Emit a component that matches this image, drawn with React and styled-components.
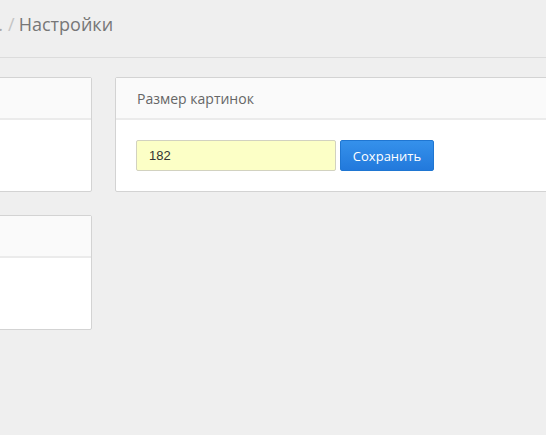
import React from 'react'
import styled, { createGlobalStyle } from 'styled-components'

const GlobalStyle = createGlobalStyle`
  html, body {
    margin: 0;
    padding: 0;
    background: #efefef;
    overflow: hidden;
  }
  body {
    font-family: "Open Sans", "Liberation Sans", sans-serif;
    color: #555;
  }
`;

const Page = styled.div`
  width: 546px;
  height: 435px;
  overflow: hidden;
`;

const TopBar = styled.div`
  height: 57px;
  border-bottom: 1px solid #dcdcdc;
  display: flex;
  align-items: center;
  overflow: hidden;
`;

const Crumbs = styled.div`
  display: flex;
  align-items: center;
  white-space: nowrap;
  margin-left: -73px;
  margin-top: -9px;
  font-size: 18px;
`;

const Crumb = styled.span`
  color: ${(p) => (p.$current ? '#777' : '#aaa')};
`;

const Sep = styled.span`
  color: #c4c4c4;
  margin: 0 4px 0 5px;
`;

const Content = styled.div`
  display: grid;
  grid-template-columns: 300px 460px;
  gap: 23px;
  margin-left: -208px;
  padding-top: 19px;
  align-items: start;
`;

const Column = styled.div`
  display: flex;
  flex-direction: column;
  gap: 23px;
`;

const Panel = styled.div`
  background: #fff;
  border: 1px solid #d3d3d3;
  border-radius: 2px;
`;

const PanelHeader = styled.div`
  height: 40px;
  background: #fafafa;
  border-bottom: 2px solid #ebebeb;
  display: flex;
  align-items: center;
  padding-left: 21px;
  font-size: 14px;
  color: #666;
`;

const PanelBody = styled.div`
  height: 31px;
  padding: 20px;
  display: flex;
  align-items: center;
  gap: 4px;
`;

const SizeInput = styled.input`
  box-sizing: border-box;
  width: 200px;
  height: 31px;
  border: 1px solid #d2d2c0;
  border-radius: 2px;
  background: #fcffc6;
  padding: 0 12px;
  font-family: "Liberation Sans", Arial, sans-serif;
  font-size: 13px;
  color: #333;
  outline: none;
`;

const Button = styled.button`
  box-sizing: border-box;
  width: 94px;
  height: 31px;
  border: 1px solid #1f76d2;
  border-radius: 2px;
  background: linear-gradient(#3591eb, #2279dc);
  color: #fff;
  font-family: "Open Sans", "Liberation Sans", sans-serif;
  font-size: 13px;
  cursor: pointer;
`;

export default function App() {
  return (
    <Page>
      <GlobalStyle />
      <TopBar>
        <Crumbs>
          <Crumb>Главная.</Crumb>
          <Sep>/</Sep>
          <Crumb $current>Настройки</Crumb>
        </Crumbs>
      </TopBar>
      <Content>
        <Column>
          <Panel>
            <PanelHeader />
            <PanelBody />
          </Panel>
          <Panel>
            <PanelHeader />
            <PanelBody />
          </Panel>
        </Column>
        <Column>
          <Panel>
            <PanelHeader>Размер картинок</PanelHeader>
            <PanelBody>
              <SizeInput defaultValue="182" />
              <Button>Сохранить</Button>
            </PanelBody>
          </Panel>
        </Column>
      </Content>
    </Page>
  )
}
